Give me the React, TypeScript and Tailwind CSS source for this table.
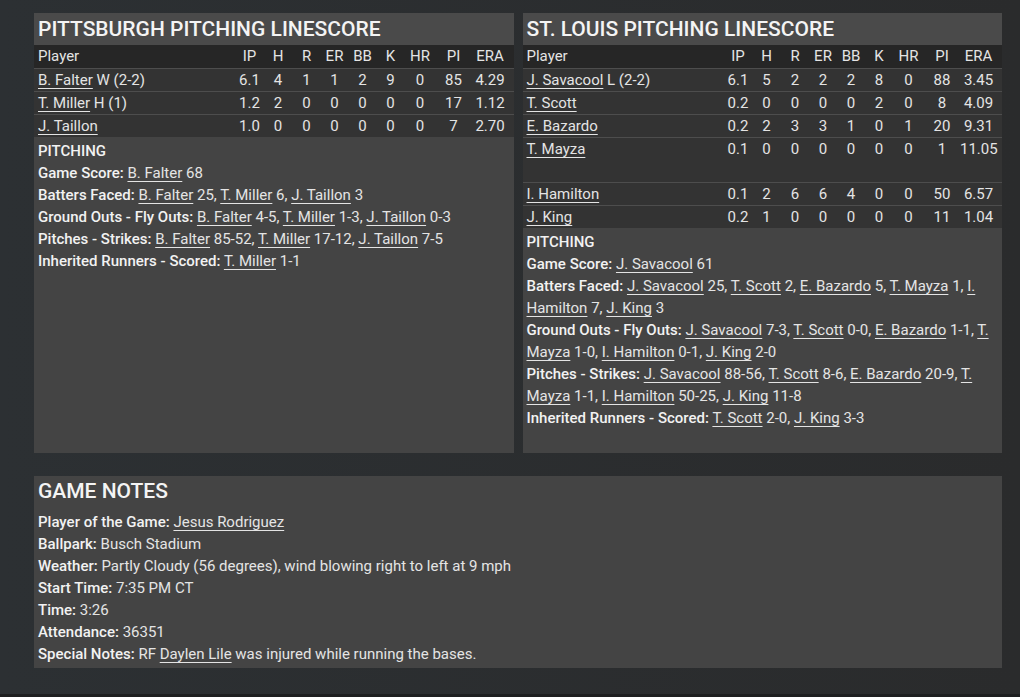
import React from "react";

type Row = { name: string; note?: string; stats: string[]; tall?: boolean };

const cols = ["IP", "H", "R", "ER", "BB", "K", "HR", "PI", "ERA"];

const pit: Row[] = [
  { name: "B. Falter", note: " W (2-2)", stats: ["6.1", "4", "1", "1", "2", "9", "0", "85", "4.29"] },
  { name: "T. Miller", note: " H (1)", stats: ["1.2", "2", "0", "0", "0", "0", "0", "17", "1.12"] },
  { name: "J. Taillon", stats: ["1.0", "0", "0", "0", "0", "0", "0", "7", "2.70"] },
];

const stl: Row[] = [
  { name: "J. Savacool", note: " L (2-2)", stats: ["6.1", "5", "2", "2", "2", "8", "0", "88", "3.45"] },
  { name: "T. Scott", stats: ["0.2", "0", "0", "0", "0", "2", "0", "8", "4.09"] },
  { name: "E. Bazardo", stats: ["0.2", "2", "3", "3", "1", "0", "1", "20", "9.31"] },
  { name: "T. Mayza", stats: ["0.1", "0", "0", "0", "0", "0", "0", "1", "11.05"], tall: true },
  { name: "I. Hamilton", stats: ["0.1", "2", "6", "6", "4", "0", "0", "50", "6.57"] },
  { name: "J. King", stats: ["0.2", "1", "0", "0", "0", "0", "0", "11", "1.04"] },
];

const grid = "grid grid-cols-[1fr_28px_29px_28px_28px_28px_28px_31px_36px_37px] pr-[5px]";

function L({ children }: { children: React.ReactNode }) {
  return <span className="underline underline-offset-[3px] decoration-1">{children}</span>;
}

function B({ children }: { children: React.ReactNode }) {
  return <span className="font-medium text-[#f2f2f2]">{children}</span>;
}

function Panel({ title, rows, children }: { title: string; rows: Row[]; children: React.ReactNode }) {
  return (
    <div className="flex flex-col flex-1">
      <div className="h-[32px] bg-[#4a4a4a] px-1 text-[21px] leading-[32px] font-medium text-[#f4f4f4]">{title}</div>
      <div className={`${grid} h-[23px] bg-[#262626] items-center`}>
        <div className="pl-1">Player</div>
        {cols.map((c) => (
          <div key={c} className="text-center">{c}</div>
        ))}
      </div>
      {rows.map((r) => (
        <div
          key={r.name}
          className={`${grid} ${r.tall ? "h-[45px]" : "h-[23px]"} bg-[#333333] border-t border-[#4d4d4d] items-start leading-[22px]`}
        >
          <div className="pl-1 whitespace-nowrap">
            <L>{r.name}</L>
            {r.note}
          </div>
          {r.stats.map((s, i) => (
            <div key={i} className="text-center whitespace-nowrap">{s}</div>
          ))}
        </div>
      ))}
      <div className="flex-1 bg-[#444444] px-1 pt-[3px] leading-[22px]">{children}</div>
    </div>
  );
}

export default function App() {
  return (
    <div
      className="w-[1020px] h-[697px] flex flex-col bg-gradient-to-r from-[#2c3033] to-[#2a2b2c] text-[15px] text-[#e4e4e4]"
      style={{ fontFamily: "Roboto, 'Noto Sans', sans-serif" }}
    >
      <div className="flex-1 pt-[13px] pl-[34px] pr-[18px]">
        <div className="flex gap-[9px] h-[440px]">
          <Panel title="PITTSBURGH PITCHING LINESCORE" rows={pit}>
            <div><B>PITCHING</B></div>
            <div><B>Game Score:</B> <L>B. Falter</L> 68</div>
            <div><B>Batters Faced:</B> <L>B. Falter</L> 25, <L>T. Miller</L> 6, <L>J. Taillon</L> 3</div>
            <div><B>Ground Outs - Fly Outs:</B> <L>B. Falter</L> 4-5, <L>T. Miller</L> 1-3, <L>J. Taillon</L> 0-3</div>
            <div><B>Pitches - Strikes:</B> <L>B. Falter</L> 85-52, <L>T. Miller</L> 17-12, <L>J. Taillon</L> 7-5</div>
            <div><B>Inherited Runners - Scored:</B> <L>T. Miller</L> 1-1</div>
          </Panel>
          <Panel title="ST. LOUIS PITCHING LINESCORE" rows={stl}>
            <div><B>PITCHING</B></div>
            <div><B>Game Score:</B> <L>J. Savacool</L> 61</div>
            <div>
              <B>Batters Faced:</B> <L>J. Savacool</L> 25, <L>T. Scott</L> 2, <L>E. Bazardo</L> 5, <L>T. Mayza</L> 1, <L>I. Hamilton</L> 7, <L>J. King</L> 3
            </div>
            <div>
              <B>Ground Outs - Fly Outs:</B> <L>J. Savacool</L> 7-3, <L>T. Scott</L> 0-0, <L>E. Bazardo</L> 1-1, <L>T. Mayza</L> 1-0, <L>I. Hamilton</L> 0-1, <L>J. King</L> 2-0
            </div>
            <div>
              <B>Pitches - Strikes:</B> <L>J. Savacool</L> 88-56, <L>T. Scott</L> 8-6, <L>E. Bazardo</L> 20-9, <L>T. Mayza</L> 1-1, <L>I. Hamilton</L> 50-25, <L>J. King</L> 11-8
            </div>
            <div>
              <B>Inherited Runners - Scored:</B> <L>T. Scott</L> 2-0, <L>J. King</L> 3-3
            </div>
          </Panel>
        </div>
        <div className="mt-[23px] h-[192px] bg-[#444444] px-1 leading-[22px]">
          <div className="h-[35px] text-[21px] leading-[31px] font-medium text-[#f4f4f4]">GAME NOTES</div>
          <div><B>Player of the Game:</B> <L>Jesus Rodriguez</L></div>
          <div><B>Ballpark:</B> Busch Stadium</div>
          <div><B>Weather:</B> Partly Cloudy (56 degrees), wind blowing right to left at 9 mph</div>
          <div><B>Start Time:</B> 7:35 PM CT</div>
          <div><B>Time:</B> 3:26</div>
          <div><B>Attendance:</B> 36351</div>
          <div><B>Special Notes:</B> RF <L>Daylen Lile</L> was injured while running the bases.</div>
        </div>
      </div>
      <div className="h-[3px] bg-[#1e1f20]" />
    </div>
  );
}
